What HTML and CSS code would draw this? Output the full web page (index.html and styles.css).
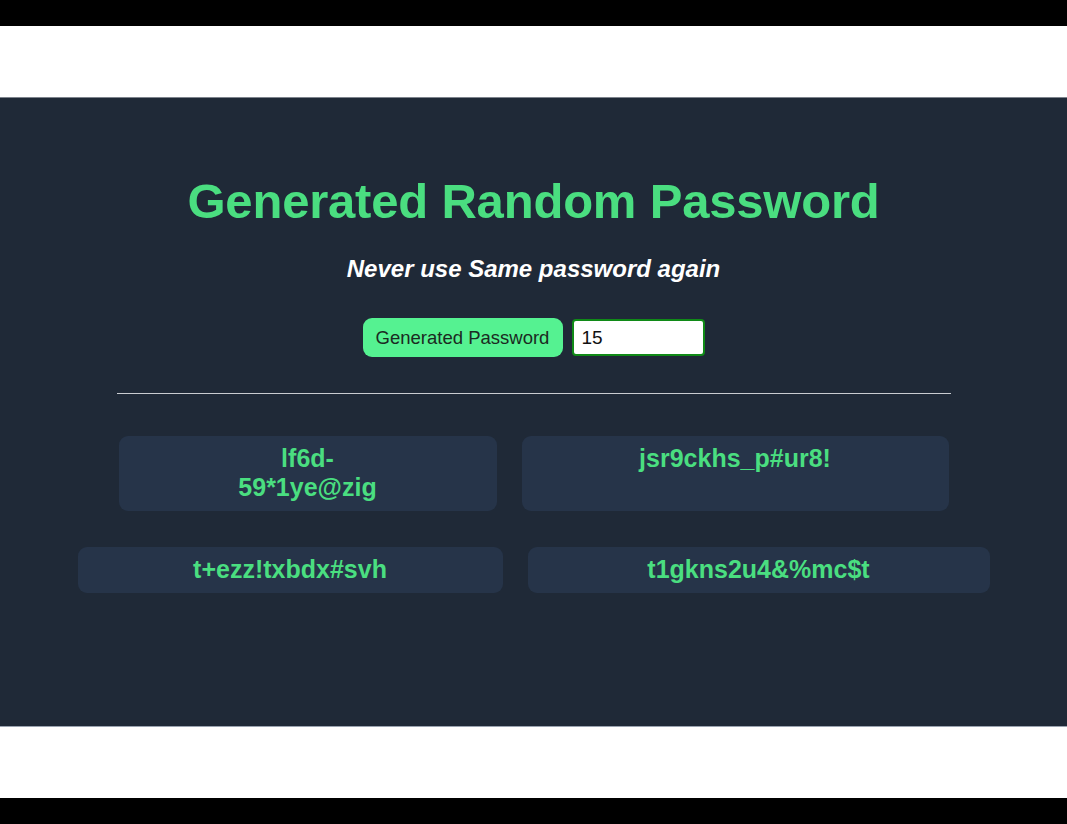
FILE: index.html
```html
<!DOCTYPE html>
<html lang="en">
<head>
<meta charset="utf-8">
<title>Generated Random Password</title>
<link rel="stylesheet" href="styles.css">
</head>
<body>
  <div class="bar"></div>
  <div class="spacer"></div>
  <main class="panel">
    <h1 class="title">Generated Random Password</h1>
    <p class="subtitle">Never use Same password again</p>
    <div class="controls">
      <button class="gen-btn" type="button">Generated Password</button>
      <input class="len-input" type="text" value="15">
    </div>
    <hr class="divider">
    <div class="cards">
      <div class="card card-a">lf6d-<br>59*1ye@zig</div>
      <div class="card card-b">jsr9ckhs_p#ur8!</div>
      <div class="card card-c">t+ezz!txbdx#svh</div>
      <div class="card card-d">t1gkns2u4&amp;%mc$t</div>
    </div>
  </main>
  <div class="spacer"></div>
  <div class="bar"></div>
</body>
</html>
```

FILE: styles.css
```css
* { box-sizing: border-box; }
html, body { margin: 0; padding: 0; }
body {
  background: #ffffff;
  font-family: "Liberation Sans", Arial, sans-serif;
  width: 1067px;
  height: 824px;
  overflow: hidden;
}
.bar { height: 26px; background: #000000; }
.spacer { height: 71px; background: #ffffff; }
.panel {
  height: 630px;
  background: #1f2937;
  border-top: 1px solid #7d838c;
  border-bottom: 1px solid #9aa3b0;
  display: flex;
  flex-direction: column;
  align-items: center;
  padding-top: 75px;
}
.title {
  margin: 0;
  font-size: 49px;
  line-height: 56px;
  font-weight: 700;
  color: #4ade80;
  letter-spacing: -0.2px;
}
.subtitle {
  margin: 26px 0 0;
  font-size: 24px;
  line-height: 28px;
  font-weight: 700;
  font-style: italic;
  color: #ffffff;
}
.controls {
  margin-top: 35px;
  display: flex;
  align-items: center;
  gap: 9px;
}
.gen-btn {
  height: 39px;
  width: 200px;
  padding: 0 12px;
  border: none;
  border-radius: 9px;
  background: #55f291;
  color: #1b2a22;
  font-family: "Liberation Sans", Arial, sans-serif;
  font-size: 18.5px;
}
.len-input {
  width: 133px;
  height: 37px;
  border: 2px solid #108a17;
  border-radius: 4px;
  background: #ffffff;
  padding: 0 8px;
  font-family: "Liberation Sans", Arial, sans-serif;
  font-size: 19px;
  color: #111111;
}
.divider {
  margin: 36px 0 0;
  width: 834px;
  border: none;
  border-top: 1px solid #c9ccd1;
  height: 0;
}
.cards {
  margin-top: 42px;
  width: 1067px;
  display: flex;
  flex-wrap: wrap;
  justify-content: center;
  column-gap: 25px;
  row-gap: 36px;
}
.card {
  background: #263449;
  border-radius: 9px;
  padding: 8px 10px 9px;
  text-align: center;
  color: #4ade80;
  font-size: 25px;
  line-height: 29px;
  font-weight: 700;
  min-height: 46px;
}
.card-a { width: 378px; }
.card-b { width: 427px; }
.card-c { width: 425px; }
.card-d { width: 462px; }
```
